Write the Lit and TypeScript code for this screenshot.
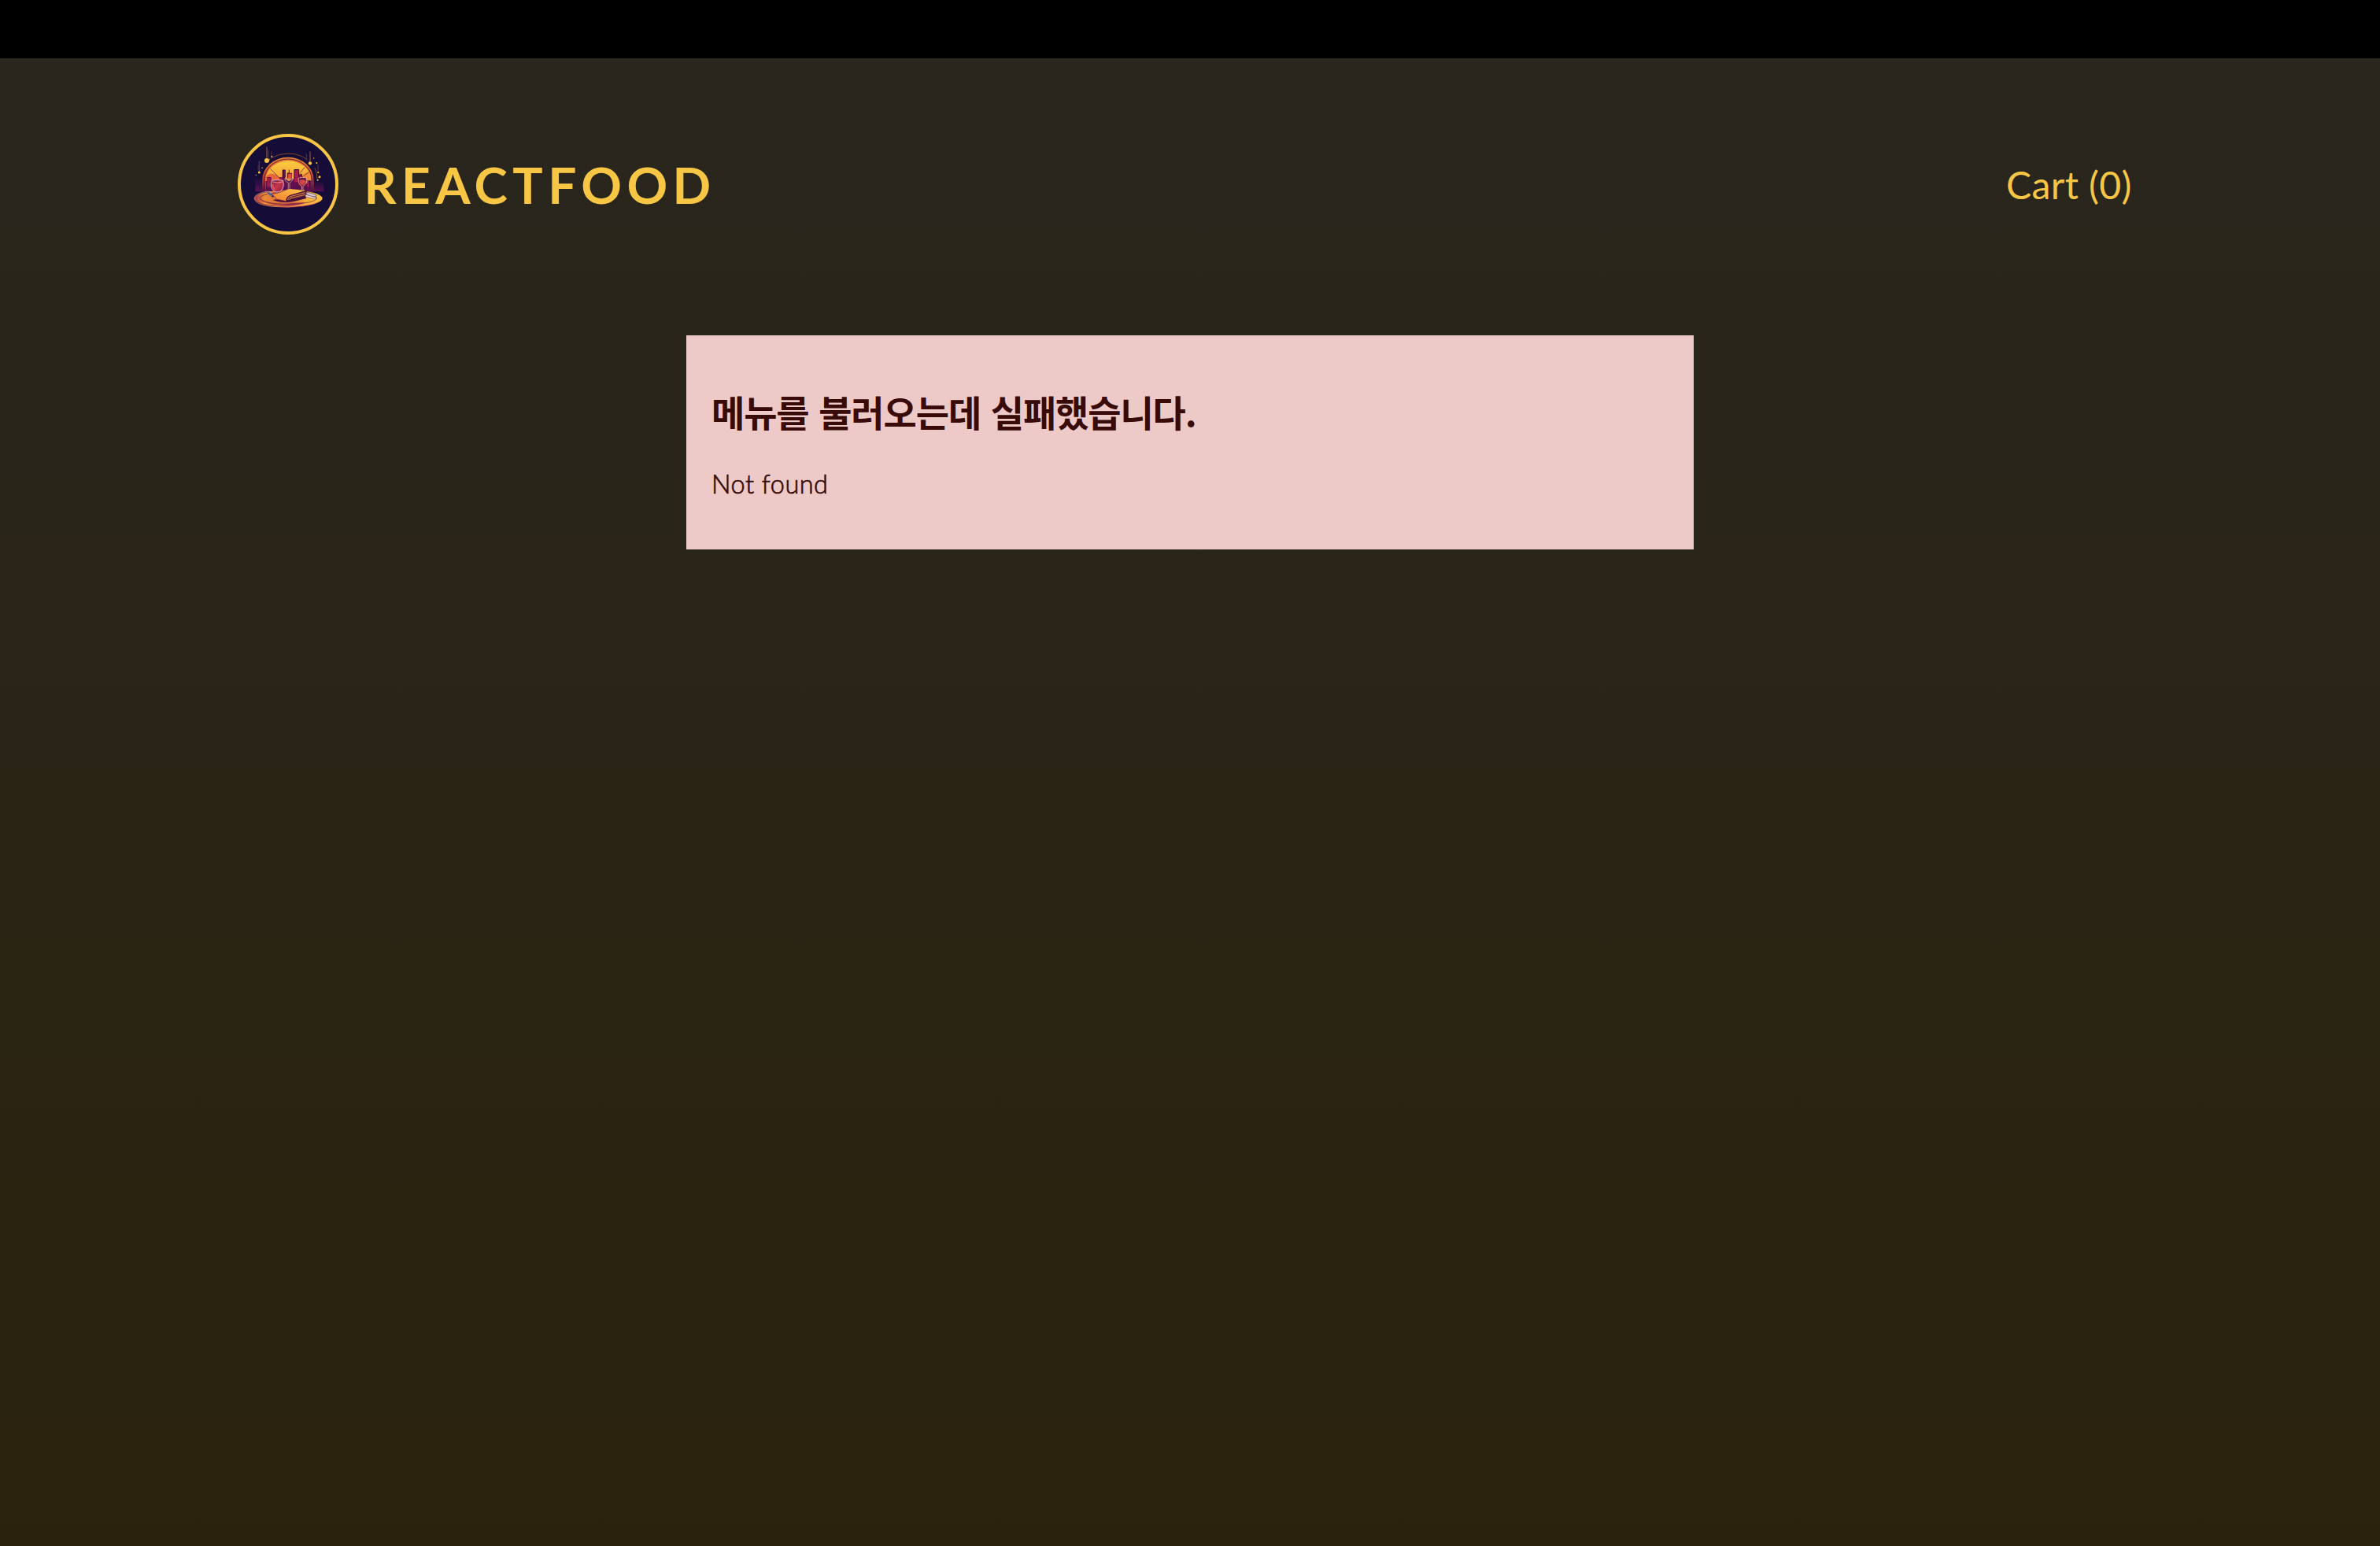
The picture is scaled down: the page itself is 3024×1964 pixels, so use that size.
import { LitElement, html, css, svg } from "lit";
import { customElement, property } from "lit/decorators.js";

const stars = [
  [147, 132, 9], [118, 177, 4.5], [166, 116, 3], [312, 142, 6.5], [337, 141, 3], [343, 177, 3],
  [348, 194, 4.5], [341, 206, 3], [129, 160, 2.2], [157, 128, 2], [326, 123, 2.2], [106, 187, 2],
];

const trails = [
  [147, 80, 122, 3], [153, 92, 122, 1.5], [165, 97, 112, 1.5], [118, 134, 174, 2], [114, 150, 170, 1.2],
  [312, 98, 136, 3], [298, 106, 126, 1.5], [342, 146, 172, 1.5],
];

@customElement("food-logo")
export class FoodLogo extends LitElement {
  static styles = css`
    :host { display: block; width: 128px; height: 128px; }
    .art { display: block; width: 100%; height: 100%; }
  `;

  render() {
    return html`<svg class="art" viewBox="36 30 384 384" aria-hidden="true">
      <defs>
        <linearGradient id="sun" x1="0" y1="0" x2="0" y2="1">
          <stop offset="0" stop-color="#fbd03f" /><stop offset=".55" stop-color="#f7a43a" /><stop offset="1" stop-color="#d9532f" />
        </linearGradient>
        <linearGradient id="ring" x1="0" y1="0" x2="0" y2="1">
          <stop offset="0" stop-color="#ee8534" /><stop offset=".55" stop-color="#d04a31" /><stop offset="1" stop-color="#561043" />
        </linearGradient>
        <linearGradient id="plate" x1="0" y1="0" x2="1" y2="0">
          <stop offset="0" stop-color="#a5304b" /><stop offset=".15" stop-color="#ec8a35" /><stop offset=".5" stop-color="#d8603a" />
          <stop offset=".75" stop-color="#f6ad38" /><stop offset="1" stop-color="#fbc544" />
        </linearGradient>
        <linearGradient id="wine" x1="0" y1="0" x2="1" y2="1">
          <stop offset="0" stop-color="#6c164a" /><stop offset=".5" stop-color="#c8354a" /><stop offset="1" stop-color="#8c1d50" />
        </linearGradient>
        <linearGradient id="cloth" x1="0" y1="1" x2="1" y2="0">
          <stop offset="0" stop-color="#ee7530" /><stop offset=".5" stop-color="#f9a33b" /><stop offset="1" stop-color="#fccb4c" />
        </linearGradient>
        <linearGradient id="haze" x1="0" y1="0" x2="0" y2="1">
          <stop offset="0" stop-color="#4a0f52" stop-opacity="0" /><stop offset="1" stop-color="#5a1150" />
        </linearGradient>
        <clipPath id="dome"><path d="M142 250V205a87 72 0 0 1 174 0v45z" /></clipPath>
      </defs>
      <circle cx="228" cy="222" r="186" fill="#150d38" />
      <path d="M103 250v-46h20v-14h14v60z" fill="url(#haze)" />
      <path d="M322 250v-38h16v-7h16v12h10v33z" fill="url(#haze)" />
      <path d="M162 123q30-18 66-18 44 0 74 25M330 160q9 17 9 43" fill="none" stroke="#a9652e" stroke-width="2" />
      <path d="M130 252v-46a98 87 0 0 1 196 0v46z" fill="url(#ring)" />
      <path d="M137 250v-44a91 80 0 0 1 182 0v44" fill="none" stroke="#35102f" stroke-width="2.5" />
      <g clip-path="url(#dome)">
        <rect x="140" y="125" width="180" height="130" fill="url(#sun)" />
        <path d="M140 200q10-20 32-17 20 4 26 22v50h-60z" fill="#e9653b" />
        <path d="M289 184q18-14 30-7v30h-30z" fill="#f08a37" />
        <path d="M160 163l38 38M292 157l-18 22M309 174l-30 23" stroke="#4a1830" stroke-width="2" fill="none" />
        <path d="M140 250v-40h8v-15h16v18h32v-18h10v-28h11v36h8v-24h18v24h8v-38h18v21h12v20h14v12h10v-10h12v42z" fill="#64104f" />
        <path d="M226 182h16v24h-16z" fill="#e54a2c" />
        <path d="M252 168h17v46h-17z" fill="#a51e4f" />
        <path d="M148 198h13v40h-13zM198 197h8v33h-8zM272 190h7v38h-7zM301 213h9v30h-9z" fill="#9b1d4f" />
        <path d="M209 196v-28h8v28M226 198v-18h6v-13M252 202v-35h17v35M164 214h15M269 184h12v16M298 210h12v20" fill="none" stroke="#280c3c" stroke-width="2.5" />
        <path d="M138 232h180v22H138z" fill="#4f0e4d" opacity=".65" />
      </g>
      ${trails.map(([x, y1, y2, w]) => svg`<path d="M${x} ${y1}V${y2}" stroke="#9e6234" stroke-width=${w} />`)}
      ${stars.map(([x, y, r]) => svg`<circle cx=${x} cy=${y} r=${r} fill="#f8c542" />`)}
      <ellipse cx="229" cy="282" rx="122" ry="29" fill="#70184c" />
      <ellipse cx="229" cy="276" rx="130" ry="32" fill="url(#plate)" />
      <path d="M99 276q4 24 68 31 62 6 120-4 66-12 72-32" fill="none" stroke="#f6a558" stroke-width="2" />
      <path d="M99 276q3-20 52-27" fill="none" stroke="#caa2b3" stroke-width="2" />
      <ellipse cx="229" cy="275" rx="108" ry="23" fill="none" stroke="#641b43" stroke-width="2" />
      <path d="M118 276q28 22 96 24 20-7 80-9-20 12-66 13-84-1-110-28z" fill="#86204e" opacity=".75" />
      <path d="M170 282q30 13 74 7l54-13-6-12-60 8z" fill="#40103f" />
      <path d="M215 202q15-4 31 0-2 11-12 14v23q6 2 8 5h-21q3-3 8-5v-23q-11-3-14-14z" fill="#531448" stroke="#d9b5b2" stroke-width="2" />
      <path d="M218 203q12-3 25 1l-12 7z" fill="#f2a14a" />
      <path d="M268 198q14-4 30 0 3 25-13 31v15q7 1 10 4h-27q6-3 12-4v-15q-15-7-12-31z" fill="#5e164d" stroke="#f1a875" stroke-width="2.5" />
      <path d="M271 207q12-5 24 0 0 15-12 19-12-4-12-19z" fill="#d74545" />
      <path d="M166 208q22-6 43 0 7 30-12 42-12 5-22-1-18-14-9-41z" fill="url(#wine)" stroke="#d8bcd0" stroke-width="2.8" />
      <path d="M168 213q18 6 39 0" fill="none" stroke="#eea09a" stroke-width="2.5" />
      <path d="M170 220q-2 16 8 23" fill="none" stroke="#f07856" stroke-width="3" />
      <path d="M148 251q14 1 30 14l-8 8-19-14z" fill="#383460" />
      <path d="M148 250l22 12M147 256l20 11M154 249l14 7" stroke="#c0b8d4" stroke-width="2" />
      <path d="M165 262q40-10 67-23 34 2 66 8-36 11-61 17-15 6-16 23-26-6-38-8-2-11-18-17z" fill="url(#cloth)" stroke="#6d2138" stroke-width="1.5" />
      <path d="M222 286q-2-18 17-22l58-17q7 6-1 16-8 9-33 14z" fill="#67213c" stroke="#270c35" stroke-width="2" />
      <path d="M227 282q0-11 14-14l52-14M233 282q3-9 14-9l46-11" fill="none" stroke="#e9a044" stroke-width="2.5" />
      <path d="M297 252q25 4 40 13l-7 5q-22-1-33-11z" fill="#d7c5d5" stroke="#35183f" stroke-width="1.5" />
      <path d="M296 262q20 6 42 12l-9 4q-22-4-36-10z" fill="#f2dfda" stroke="#5c2441" stroke-width="1.5" />
      <circle cx="228" cy="222" r="186" fill="none" stroke="#f8c545" stroke-width="12" />
    </svg>`;
  }
}

@customElement("error-card")
export class ErrorCard extends LitElement {
  @property() heading = "";
  @property() message = "";

  static styles = css`
    :host {
      display: block;
      box-sizing: border-box;
      width: 1280px;
      height: 272px;
      margin: 64px auto 0;
      padding: 64px 32px 0;
      background: #edcac8;
      color: #380a08;
    }
    .heading {
      margin: 0;
      font: 700 46px/64px "Noto Sans CJK KR", sans-serif;
      letter-spacing: -1.15px;
      word-spacing: 3.4px;
      white-space: nowrap;
    }
    .message {
      margin: 39px 0 0;
      font: 300 32.5px/44px Lato, sans-serif;
      letter-spacing: 0.5px;
      -webkit-text-stroke: 0.7px currentColor;
    }
  `;

  render() {
    return html`<h2 class="heading">${this.heading}</h2>
      <p class="message">${this.message}</p>`;
  }
}

@customElement("app-root")
export class AppRoot extends LitElement {
  static styles = css`
    :host { display: flex; flex-direction: column; height: 1964px; background: #000; }
    .page { flex: 1; margin-top: 74px; background: linear-gradient(180deg, #29261e, #2a220c); }
    .header {
      display: flex;
      align-items: center;
      justify-content: space-between;
      padding: 96px 10%;
      padding-bottom: 64px;
      color: #f8c645;
      font-family: Lato, sans-serif;
    }
    .brand { display: flex; align-items: center; gap: 32px; }
    .title { margin: 0; font-size: 64px; line-height: 77px; font-weight: 700; letter-spacing: 6.4px; }
    .cart {
      margin: 0;
      padding: 2px 13px 0 12px;
      border: 0;
      background: none;
      color: inherit;
      font: 400 48px/58px Lato, sans-serif;
      letter-spacing: 0.4px;
    }
  `;

  render() {
    return html`<div class="page">
      <header class="header">
        <div class="brand">
          <food-logo></food-logo>
          <h1 class="title">REACTFOOD</h1>
        </div>
        <button class="cart">Cart (0)</button>
      </header>
      <error-card heading="메뉴를 불러오는데 실패했습니다." message="Not found"></error-card>
    </div>`;
  }
}
